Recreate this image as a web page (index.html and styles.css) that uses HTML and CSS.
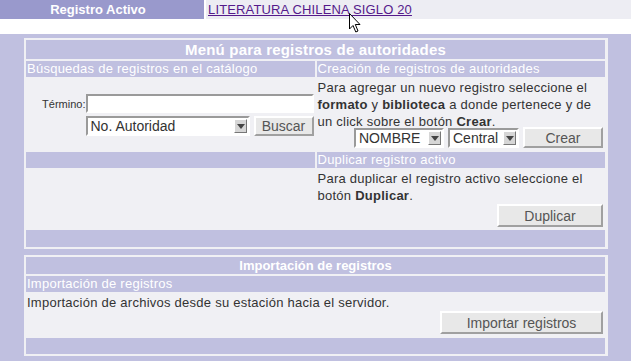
FILE: index.html
```html
<!DOCTYPE html>
<html lang="es">
<head>
<meta charset="utf-8">
<title>Menú para registros de autoridades</title>
<link rel="stylesheet" href="styles.css">
</head>
<body>
<div class="topbar">
  <div class="active-label">Registro Activo</div>
  <div class="active-value"><a href="#" class="active-link">LITERATURA CHILENA SIGLO 20</a></div>
</div>
<div class="spacer"></div>
<div class="main">
  <section class="panel panel-menu">
    <div class="title span2">Menú para registros de autoridades</div>
    <div class="sub">Búsquedas de registros en el catálogo</div>
    <div class="sub">Creación de registros de autoridades</div>
    <div class="cell search-cell">
      <div class="search-row">
        <label class="term-label" for="term">Término:</label>
        <input id="term" class="text-input" type="text">
      </div>
      <div class="search-row">
        <div class="select sel-auth"><span class="sel-text">No. Autoridad</span><span class="arrow"></span></div>
        <button class="btn btn-buscar">Buscar</button>
      </div>
    </div>
    <div class="cell text-cell">
      <p class="desc">Para agregar un nuevo registro seleccione el<br><b>formato</b> y <b>biblioteca</b> a donde pertenece y de<br>un click sobre el botón <b>Crear</b>.</p>
      <div class="action-row action-tight">
        <div class="select sel-nombre"><span class="sel-text">NOMBRE</span><span class="arrow"></span></div>
        <div class="select sel-central"><span class="sel-text">Central</span><span class="arrow"></span></div>
        <button class="btn btn-crear">Crear</button>
      </div>
    </div>
    <div class="sub"></div>
    <div class="sub">Duplicar registro activo</div>
    <div class="cell"></div>
    <div class="cell text-cell">
      <p class="desc">Para duplicar el registro activo seleccione el<br>botón <b>Duplicar</b>.</p>
      <div class="action-row">
        <button class="btn btn-dup">Duplicar</button>
      </div>
    </div>
    <div class="foot span2"></div>
  </section>
  <section class="panel panel-import">
    <div class="title title-small">Importación de registros</div>
    <div class="sub">Importación de registros</div>
    <div class="cell text-cell">
      <p class="desc">Importación de archivos desde su estación hacia el servidor.</p>
      <div class="action-row">
        <button class="btn btn-import">Importar registros</button>
      </div>
    </div>
    <div class="foot"></div>
  </section>
</div>
<svg class="cursor" width="13" height="20" viewBox="0 0 13 20"><path d="M0.5 0.5 L0.5 16 L4 12.5 L6.8 19 L9 18 L6.3 11.5 L11 11.5 Z" fill="#fff" stroke="#000" stroke-width="1"/></svg>
</body>
</html>
```
FILE: styles.css
```css
html, body {
  margin: 0;
  padding: 0;
  background: #c0c0e0;
}
body {
  font-family: "Liberation Sans", Arial, sans-serif;
  font-size: 13px;
  color: #333;
  width: 631px;
  height: 361px;
  overflow: hidden;
  position: relative;
}
.topbar {
  display: flex;
  height: 19px;
  background: #fff;
  gap: 2px;
}
.active-label {
  width: 196px;
  padding-right: 8px;
  background: #9999cc;
  color: #fff;
  font-weight: bold;
  text-align: center;
  line-height: 19px;
}
.active-value {
  flex: 1;
  background: #ededf3;
  line-height: 19px;
  padding-left: 2px;
}
.active-link {
  color: #551a8b;
  font-size: 13px;
  letter-spacing: 0.15px;
}
.spacer {
  height: 15px;
  background: #fff;
}
.main {
  padding: 4px 23px 0 24px;
  display: flex;
  flex-direction: column;
  gap: 6px;
}
.panel {
  background: #f0f0f4;
  padding: 2px 3px 2px 2px;
  display: grid;
  gap: 2px;
}
.panel-menu {
  grid-template-columns: 1fr 1fr;
  grid-template-rows: 19px 16px 71px 16px 58px 17px;
}
.panel-import {
  grid-template-columns: 1fr;
  grid-template-rows: 17px 16px 42px 16px;
}
.span2 {
  grid-column: 1 / 3;
}
.title {
  background: #c0c0e0;
  color: #fff;
  font-weight: bold;
  font-size: 15px;
  letter-spacing: 0.2px;
  text-align: center;
  line-height: 19px;
}
.title-small {
  font-size: 13px;
  letter-spacing: 0;
  line-height: 17px;
}
.sub {
  background: #c0c0e0;
  color: #fff;
  line-height: 16px;
  padding-left: 1px;
  letter-spacing: 0.25px;
  white-space: nowrap;
  overflow: hidden;
}
.foot {
  background: #c0c0e0;
}
.cell {
  background: #f0f0f4;
}
.search-cell {
  display: flex;
  flex-direction: column;
  justify-content: center;
  align-items: flex-end;
  gap: 3px;
  padding-right: 1px;
  padding-top: 1px;
}
.search-row {
  display: flex;
  align-items: center;
  gap: 4px;
}
.search-row:first-child {
  gap: 0;
}
.term-label {
  font-size: 11px;
  color: #333;
}
.text-input {
  width: 228px;
  height: 19px;
  box-sizing: border-box;
  margin: 0;
  padding: 0 2px;
  border: 2px solid;
  border-color: #9a9a9a #fff #fff #9a9a9a;
  background: #fff;
  font: inherit;
}
.text-cell {
  display: flex;
  flex-direction: column;
  padding-left: 1px;
  padding-right: 2px;
}
.desc {
  margin: 0;
  line-height: 17px;
  color: #333;
  letter-spacing: 0.25px;
  white-space: nowrap;
}
.desc b {
  color: #333;
}
.action-row {
  display: flex;
  justify-content: flex-end;
  align-items: center;
  gap: 4px;
}
.action-tight {
  margin-top: -3px;
}
.select {
  display: flex;
  align-items: center;
  height: 20px;
  box-sizing: border-box;
  border: 2px solid;
  border-color: #9a9a9a #fff #fff #9a9a9a;
  background: #fff;
}
.sel-text {
  flex: 1;
  padding-left: 3px;
  color: #333;
  white-space: nowrap;
  font-size: 14px;
}
.arrow {
  width: 11px;
  height: 12px;
  margin-right: 1px;
  background: #d6d6d6;
  border: 1px solid;
  border-color: #fff #777 #777 #fff;
  position: relative;
}
.arrow::after {
  content: "";
  position: absolute;
  left: 2px;
  top: 4px;
  border-left: 4px solid transparent;
  border-right: 4px solid transparent;
  border-top: 5px solid #444;
}
.sel-auth {
  width: 164px;
}
.sel-nombre {
  width: 90px;
}
.sel-central {
  width: 71px;
}
.btn {
  margin: 0;
  padding: 0;
  background: #e8e8e8;
  border: 2px solid;
  border-color: #fff #a0a0a0 #a0a0a0 #fff;
  font: inherit;
  font-size: 14px;
  color: #555;
  box-sizing: border-box;
}
.btn-buscar {
  width: 60px;
  height: 20px;
}
.btn-crear {
  width: 80px;
  height: 21px;
}
.btn-dup {
  width: 106px;
  height: 23px;
}
.btn-import {
  width: 163px;
  height: 23px;
}
.cursor {
  position: absolute;
  left: 349px;
  top: 13px;
}
```
